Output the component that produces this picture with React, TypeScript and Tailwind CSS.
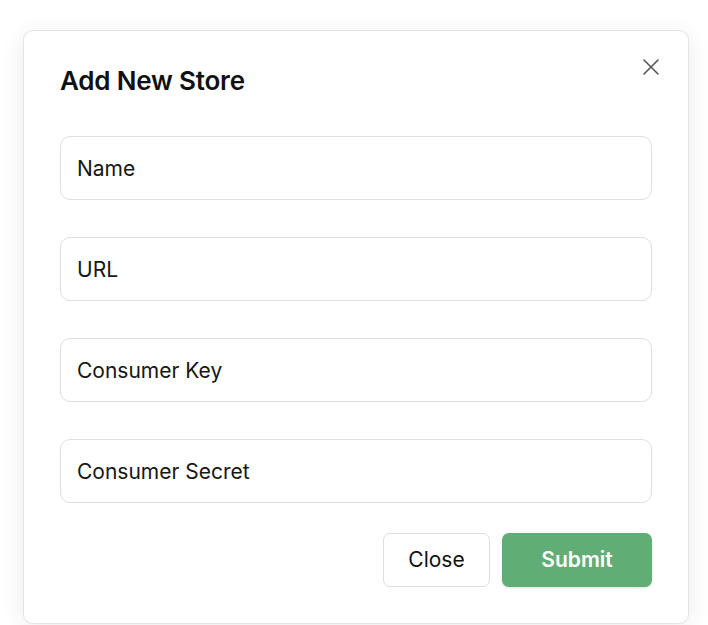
const fields = ["Name", "URL", "Consumer Key", "Consumer Secret"];

const App = () => {
  return (
    <div
      className="min-h-screen bg-white pt-[30px] pl-[23px]"
      style={{ fontFamily: "Inter, 'Noto Sans', sans-serif" }}
    >
      <div className="relative w-[666px] rounded-[10px] border border-[#e4e4e7] bg-white px-[36px] pt-[34px] pb-[36px] shadow-[0_4px_24px_rgba(0,0,0,0.08)]">
        <button className="absolute right-[28px] top-[27px] p-[1px] text-[#555]">
          <svg width="16" height="16" viewBox="0 0 16 16" fill="none" stroke="currentColor" strokeWidth="1.6" strokeLinecap="round">
            <path d="M1 1L15 15M15 1L1 15" />
          </svg>
        </button>

        <h2 className="text-[26px] leading-[32px] font-semibold tracking-[-0.2px] text-[#111]">
          Add New Store
        </h2>

        <div className="mt-[39px] flex flex-col gap-[37px]">
          {fields.map((label) => (
            <input
              key={label}
              placeholder={label}
              className="h-[64px] w-full rounded-[10px] border border-[#dedee3] px-[16px] text-[21px] text-[#161616] placeholder:text-[#161616] outline-none"
            />
          ))}
        </div>

        <div className="mt-[30px] flex justify-end gap-[12px]">
          <button className="h-[54px] w-[107px] rounded-[7px] border border-[#dedee3] bg-white text-[21px] font-normal text-[#111]">
            Close
          </button>
          <button className="h-[54px] w-[150px] rounded-[7px] bg-[#60ae75] text-[21px] font-semibold text-white shadow-sm">
            Submit
          </button>
        </div>
      </div>
    </div>
  );
};

export default App;
